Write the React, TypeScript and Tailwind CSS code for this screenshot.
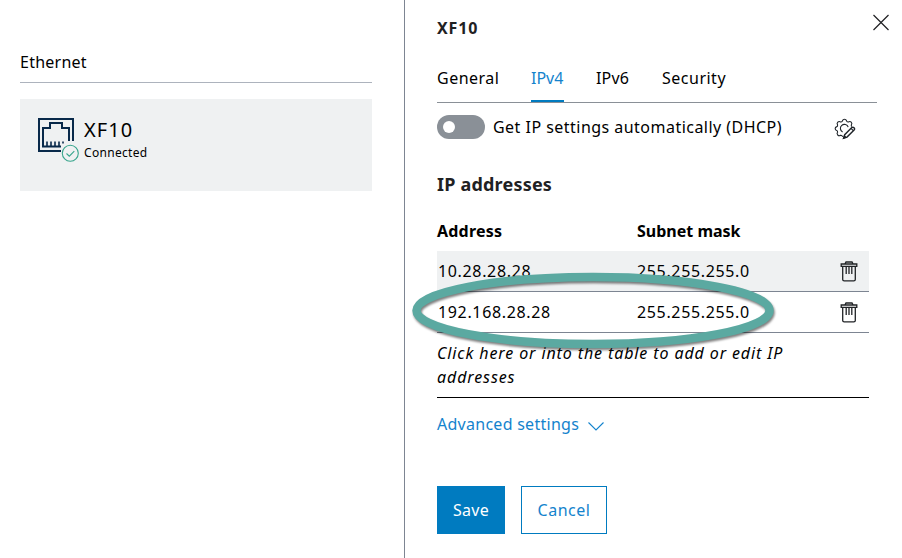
import React from "react";

const rows = [
  { address: "10.28.28.28", mask: "255.255.255.0" },
  { address: "192.168.28.28", mask: "255.255.255.0" },
];

function EthernetIcon() {
  return (
    <svg width="44" height="46" viewBox="0 0 44 46" fill="none" className="block">
      <path d="M25 35H3V3H37V25" stroke="#08294a" strokeWidth="2" />
      <path d="M25 30.5H7V12H14V7H26V12H33V25" stroke="#08294a" strokeWidth="2" />
      <path d="M11 25.5v5M15 25.5v5M19 25.5v5M23 25.5v5M27 25.5v2" stroke="#08294a" strokeWidth="1.6" />
      <circle cx="34.3" cy="37.3" r="8" fill="#eff1f2" stroke="#37a58c" strokeWidth="1.1" />
      <path d="M30.5 37.5l2.8 2.7 5-5" stroke="#37a58c" strokeWidth="1.1" />
    </svg>
  );
}

function GearEditIcon() {
  return (
    <svg width="22" height="22" viewBox="0 0 22 22" fill="none" className="block" stroke="#1f2429" strokeWidth="1.1">
      <path d="M8.6 18.8Q8.1 17 6.6 17.2Q5 18.3 3.7 17Q2.5 15.7 3.6 14.2Q3.9 12.6 2.2 12.2Q1.2 12 1.2 10.6Q1.2 9.2 2.4 8.9Q3.9 8.4 3.6 7Q2.5 5.5 3.8 4.1Q5.1 2.9 6.6 4Q8.2 4.3 8.6 2.5Q9 1.2 10.5 1.2Q12 1.2 12.4 2.5Q12.8 4.3 14.4 4Q15.9 2.9 17.2 4.1Q18.5 5.4 17.3 7Q17.2 8 17.8 8.6" />
      <path d="M8.6 14A4 4 0 1 1 14.2 9.2" />
      <path d="M9.6 20.2L10.7 16.7L17.8 9.6Q18.9 8.7 20 9.8Q21.1 10.9 20.1 12L13 19.1Z" fill="#fff" strokeWidth="1.4" />
      <path d="M9.6 20.2l.8-2.4 1.5 1.5zM17 10.4l2.3 2.3" fill="#1f2429" />
    </svg>
  );
}

function TrashIcon() {
  return (
    <svg width="18" height="22" viewBox="0 0 18 22" fill="none" className="block" stroke="#202326" strokeWidth="1.3">
      <path d="M5 3.9L6 2H12L13 3.9M1.2 4H16.8V6.4H1.2ZM2.7 6.4V19.5Q2.7 20.9 4.2 20.9H13.8Q15.3 20.9 15.3 19.5V6.4" />
      <path d="M6.2 6.5v7.5M9 6.5v7.5M11.8 6.5v7.5" />
    </svg>
  );
}

export default function App() {
  return (
    <div className="flex h-[558px] w-[902px] overflow-hidden bg-white font-['Noto_Sans',sans-serif] text-base leading-6 text-black">
      <aside className="w-[404px] shrink-0 pl-5 pr-8 pt-[50px]">
        <h2 className="h-[33px] border-b border-[#adb3bd] tracking-[0.25px]">Ethernet</h2>
        <div className="mt-4 flex h-[92px] bg-[#eff1f2] pl-4 pt-[17px]">
          <EthernetIcon />
          <div className="ml-1">
            <div className="h-[27px] text-xl leading-7 tracking-[1.1px]">XF10</div>
            <div className="text-xs leading-5 tracking-[0.3px]">Connected</div>
          </div>
        </div>
      </aside>
      <main className="relative flex w-[498px] flex-col border-l border-[#7d8592] pl-8 pr-[25px]">
        <header className="flex h-[66px] items-start justify-between pt-4">
          <h1 className="font-bold tracking-[0.9px] text-[#1f2123]">XF10</h1>
          <button aria-label="Close" className="-mr-3 -mt-0.5">
            <svg width="16" height="17" viewBox="0 0 16 17" className="block" stroke="#202124" strokeWidth="1.2">
              <path d="M.5 1l15 15M15.5 1l-15 15" />
            </svg>
          </button>
        </header>
        <nav className="flex h-[37px] gap-8 border-b border-[#8a9097]">
          <span className="w-[62px] whitespace-nowrap tracking-[0.5px]">General</span>
          <span className="h-[36px] w-[33px] whitespace-nowrap border-b-2 border-[#007bc0] text-[#1483cd]">IPv4</span>
          <span className="w-[34px] whitespace-nowrap tracking-[0.2px]">IPv6</span>
          <span className="whitespace-nowrap tracking-[0.5px]">Security</span>
        </nav>
        <div className="flex h-[69px] pt-3">
          <div className="flex h-6 w-12 items-center rounded-full bg-[#8a9097] pl-1.5">
            <span className="size-3 rounded-full bg-white" />
          </div>
          <span className="ml-2 w-[341px] whitespace-nowrap tracking-[0.47px]">Get IP settings automatically (DHCP)</span>
          <span className="mt-[3px]"><GearEditIcon /></span>
        </div>
        <h2 className="h-[47px] text-lg font-bold leading-6 tracking-[0.2px] text-[#1f2123]">IP addresses</h2>
        <section className="w-[432px]">
          <div className="flex h-8 font-bold">
            <span className="w-[200px] tracking-[0.2px]">Address</span>
            <span>Subnet mask</span>
          </div>
          {rows.map((row, i) => (
            <div key={row.address} className={`flex h-[41px] items-center border-b border-[#7d8592] tracking-[0.65px] ${i === 0 ? "bg-[#eff1f2]" : ""}`}>
              <span className="w-[200px] pl-px">{row.address}</span>
              <span className="w-[203px]">{row.mask}</span>
              <TrashIcon />
            </div>
          ))}
          <div className="h-[65px] whitespace-nowrap border-b border-black pt-2 italic tracking-[0.89px]">
            Click here or into the table to add or edit IP<br />addresses
          </div>
        </section>
        <button className="mt-[14px] flex h-6 items-center text-[#1483cd]">
          <span className="w-[151px] text-left tracking-[0.27px]">Advanced settings</span>
          <svg width="16" height="9" viewBox="0 0 16 9" fill="none" className="mt-[5px]" stroke="currentColor" strokeWidth="1.1">
            <path d="M.5.5L8 8L15.5.5" />
          </svg>
        </button>
        <div className="mt-[50px] flex gap-4">
          <button className="h-12 w-[68px] bg-[#007bc0] tracking-[0.3px] text-white">Save</button>
          <button className="h-12 w-[86px] border border-[#007bc0] tracking-[0.5px] text-[#1483cd]">Cancel</button>
        </div>
        <svg width="370" height="84" viewBox="0 0 370 84" fill="none" className="pointer-events-none absolute left-[5px] top-[270px] drop-shadow-[1px_2px_1px_rgba(0,0,0,0.5)]">
          <ellipse cx="183" cy="40.5" rx="176.5" ry="33.5" stroke="#5ba9a1" strokeWidth="8.5" />
        </svg>
      </main>
    </div>
  );
}
